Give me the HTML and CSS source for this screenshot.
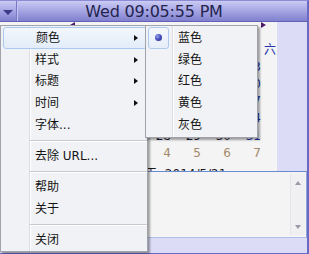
FILE: index.html
```html
<!DOCTYPE html>
<html>
<head>
<meta charset="utf-8">
<link rel="stylesheet" href="styles.css">
</head>
<body>
<div class="window">
  <div class="titlebar">
    <div class="drop"><span class="drop-tri"></span></div>
    <div class="title">Wed 09:05:55 PM</div>
  </div>
  <div class="area">
    <div class="cal">
      <div class="cal-nav"><span class="nav-prev"></span><span class="nav-month">2014年5月</span><span class="nav-next"></span></div>
      <div class="cal-head">
        <span>日</span><span>一</span><span>二</span><span>三</span><span>四</span><span>五</span><span class="sat">六</span>
      </div>
      <div class="cal-grid">
        <span class="other">27</span><span class="other">28</span><span class="other">29</span><span class="other">30</span><span>1</span><span>2</span><span class="sat">3</span>
        <span>4</span><span>5</span><span>6</span><span>7</span><span>8</span><span>9</span><span class="sat">10</span>
        <span>11</span><span>12</span><span>13</span><span>14</span><span>15</span><span>16</span><span class="sat">17</span>
        <span>18</span><span>19</span><span>20</span><span>21</span><span>22</span><span>23</span><span class="sat">24</span>
        <span>25</span><span>26</span><span>27</span><span>28</span><span>29</span><span>30</span><span class="sat">31</span>
        <span class="other">1</span><span class="other">2</span><span class="other">3</span><span class="other">4</span><span class="other">5</span><span class="other">6</span><span class="other">7</span>
      </div>
      <div class="cal-today">今天: 2014/5/21</div>
    </div>
    <div class="notes">
      <div class="notes-text"></div>
      <div class="scroll"><span class="up"></span><span class="down"></span></div>
    </div>
  </div>

  <div class="menu main-menu">
    <div class="item active">颜色<span class="arrow"></span></div>
    <div class="item">样式<span class="arrow"></span></div>
    <div class="item">标题<span class="arrow"></span></div>
    <div class="item">时间<span class="arrow"></span></div>
    <div class="item">字体...</div>
    <div class="sep"></div>
    <div class="item">去除 URL...</div>
    <div class="sep"></div>
    <div class="item">帮助</div>
    <div class="item">关于</div>
    <div class="sep"></div>
    <div class="item">关闭</div>
  </div>

  <div class="menu sub-menu">
    <div class="item checked"><span class="radio-box"><span class="dot"></span></span>蓝色</div>
    <div class="item">绿色</div>
    <div class="item">红色</div>
    <div class="item">黄色</div>
    <div class="item">灰色</div>
  </div>
</div>
</body>
</html>
```

FILE: styles.css
```css
html, body {
  margin: 0;
  padding: 0;
}
body {
  width: 309px;
  height: 254px;
  overflow: hidden;
  font-family: "DejaVu Sans", "Noto Sans CJK SC", sans-serif;
  font-size: 12px;
  color: #141414;
}
.window {
  position: relative;
  width: 309px;
  height: 254px;
  display: flex;
  flex-direction: column;
  background: #dcdcf7;
}
.titlebar {
  flex: none;
  height: 22px;
  box-sizing: border-box;
  border-top: 1px solid #8c8cd6;
  border-bottom: 1px solid #6262b6;
  border-right: 2px solid #6a6ac4;
  background: linear-gradient(#cbcbf3, #b0b0e9 35%, #9292d9 75%, #8080ce);
  display: flex;
  align-items: center;
}
.drop {
  width: 16px;
  height: 100%;
  flex: none;
  display: flex;
  align-items: center;
  justify-content: center;
  border-right: 1px solid #7878c6;
  box-shadow: 1px 0 0 #c4c4ee;
}
.drop-tri {
  width: 0;
  height: 0;
  border-top: 5px solid #3c3c86;
  border-left: 5px solid transparent;
  border-right: 5px solid transparent;
  margin-top: 2px;
}
.title {
  flex: 1;
  text-align: center;
  font-size: 16px;
  color: #24244e;
  padding-right: 16px;
  letter-spacing: -0.2px;
}

.area {
  flex: 1;
  display: flex;
  flex-direction: column;
  border-right: 2px solid #6a6ac4;
  border-bottom: 1px solid #6a6ac4;
}
.cal {
  width: 277px;
  height: 149px;
  flex: none;
  background: #f4f4f4;
  overflow: hidden;
}
.cal-nav {
  height: 19.6px;
  display: flex;
  justify-content: space-between;
  align-items: flex-start;
  padding: 0 11px 0 70px;
}
.nav-month {
  font-size: 12px;
  line-height: 14px;
  margin-top: 4px;
}
.nav-prev, .nav-next {
  width: 0;
  height: 0;
  border-top: 3px solid transparent;
  border-bottom: 3px solid transparent;
}
.nav-prev {
  border-right: 5px solid #4a1c6a;
}
.nav-next {
  border-left: 5px solid #4a1c6a;
}
.cal-head {
  height: 17.2px;
  display: grid;
  grid-template-columns: repeat(7, 30px);
  padding-left: 75px;
  align-items: center;
  color: #1a1a1a;
}
.cal-head span {
  text-align: center;
  line-height: 17px;
}
.cal-grid {
  display: grid;
  grid-template-columns: repeat(7, 30px);
  grid-auto-rows: 17.2px;
  padding-left: 52px;
}
.cal-grid span {
  text-align: right;
  padding-right: 1px;
  line-height: 17.2px;
  color: #1c1c40;
}
.cal-head .sat, .cal-grid .sat {
  color: #2434a8;
}
.cal-grid .other {
  color: #a4886a;
}
.cal-today {
  padding: 4px 0 0 133px;
  line-height: 17px;
  color: #1a1a1a;
}

.notes {
  height: 67px;
  width: 307px;
  box-sizing: border-box;
  flex: none;
  background: #f4f4f4;
  border-top: 1px solid #6a8ad2;
  border-right: 1px solid #8aa4dc;
  border-bottom: 1px solid #aec0ea;
  display: flex;
  justify-content: flex-end;
  padding: 2px 1px 2px 0;
}
.notes-text {
  flex: 1;
}
.scroll {
  width: 14px;
  background: #f0f0f2;
  border-left: 1px solid #e4e4ea;
  display: flex;
  flex-direction: column;
  justify-content: space-between;
  align-items: center;
  padding: 7px 0 6px;
}
.up, .down {
  width: 0;
  height: 0;
  border-left: 3.5px solid transparent;
  border-right: 3.5px solid transparent;
}
.up {
  border-bottom: 4px solid #9a9aa6;
}
.down {
  border-top: 4px solid #9a9aa6;
}

.menu {
  position: absolute;
  box-sizing: border-box;
  border: 1px solid #a2a2aa;
  background-color: #f1f2f5;
  box-shadow: 2px 2px 2px rgba(0, 0, 0, 0.35);
}
.main-menu {
  left: 0;
  top: 25px;
  width: 148px;
  padding: 1px 0 0;
  background-image: linear-gradient(to right, transparent 28px, #dcdcdf 28px, #dcdcdf 29px, #ffffff 29px, #ffffff 30px, transparent 30px);
}
.sub-menu {
  left: 145px;
  top: 25px;
  width: 113px;
  padding: 1px 0 1px;
  background-image: linear-gradient(to right, transparent 26px, #dcdcdf 26px, #dcdcdf 27px, #ffffff 27px, #ffffff 28px, transparent 28px);
}
.item {
  position: relative;
  height: 21.75px;
  display: flex;
  align-items: center;
  padding-left: 34px;
  box-sizing: border-box;
  line-height: 14px;
  white-space: nowrap;
}
.sub-menu .item {
  padding-left: 32px;
}
.item.active {
  margin: 0 0 0 2px;
  padding-left: 32px;
  border: 1px solid #a9c9ef;
  border-radius: 3px;
  background: linear-gradient(#f3f7fd, #e2ecf9);
}
.arrow {
  margin-left: auto;
  margin-right: 9px;
  width: 0;
  height: 0;
  border-left: 4px solid #101010;
  border-top: 3.5px solid transparent;
  border-bottom: 3.5px solid transparent;
}
.item.active .arrow {
  margin-right: 8px;
}
.sep {
  height: 9.4px;
  margin-left: 29px;
  display: flex;
  align-items: center;
}
.sep::before {
  content: "";
  flex: 1;
  height: 1px;
  background: #cacace;
  box-shadow: 0 1px 0 #ffffff;
}
.radio-box {
  position: absolute;
  left: 2px;
  top: 0;
  width: 21px;
  height: 21.75px;
  box-sizing: border-box;
  border: 1px solid #aecbef;
  border-radius: 3px;
  background: linear-gradient(#f4f8fd, #e6eefa);
  display: flex;
  align-items: center;
  justify-content: center;
}
.dot {
  width: 7px;
  height: 7px;
  border-radius: 50%;
  background: radial-gradient(circle at 35% 35%, #9aa2ec 0, #4a52c0 45%, #1e2486 100%);
}
```
